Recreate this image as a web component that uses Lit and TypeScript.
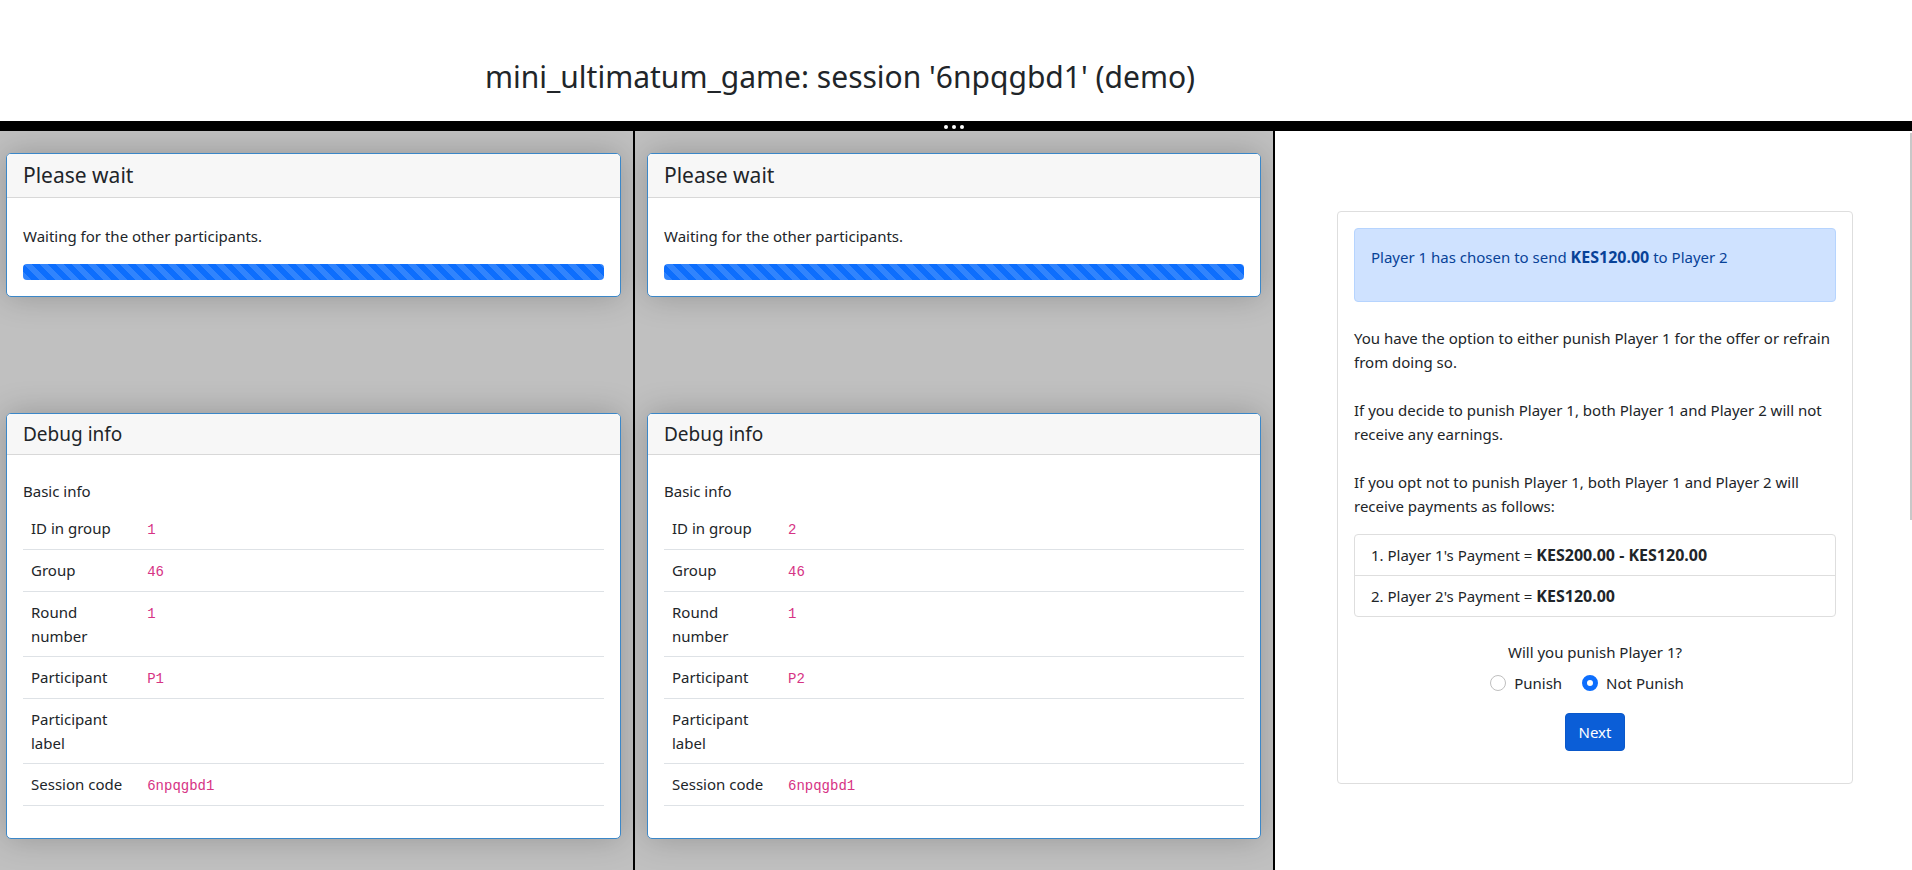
import { LitElement, html, css } from "lit";
import { customElement, property, state } from "lit/decorators.js";

const SESSION_CODE = "6npqgbd1";

const sharedStyles = css`
  :host {
    display: block;
    box-sizing: border-box;
    color: #212529;
    font-family: "Noto Sans", "Open Sans", sans-serif;
    font-size: 15px;
    line-height: 24px;
  }
  *,
  *::before,
  *::after {
    box-sizing: border-box;
  }
  h1,
  h2,
  h3,
  p {
    margin: 0;
    font-weight: 400;
  }
`;

@customElement("wait-page")
class WaitPage extends LitElement {
  @property({ type: Number }) idInGroup = 1;
  @property() participant = "P1";

  static styles = [
    sharedStyles,
    css`
      :host {
        min-width: 0;
        overflow: hidden;
        background: #c0c0c0;
        padding: 22px 12px 0;
      }
      :host(.first) {
        padding-left: 6px;
      }
      .card {
        border: 1px solid #3b87c8;
        border-radius: 5px;
        background: #fff;
        box-shadow: 0 0 32px rgba(0, 0, 0, 0.22);
      }
      .card + .card {
        margin-top: 116px;
      }
      .title,
      .subtitle {
        padding: 8px 16px;
        border-bottom: 1px solid #d8d8d8;
        border-radius: 4px 4px 0 0;
        background: #f7f7f7;
      }
      .title {
        font-size: 21px;
        line-height: 27px;
      }
      .subtitle {
        font-size: 19px;
        line-height: 24px;
      }
      .body {
        padding: 26px 16px 16px;
      }
      .debug {
        padding: 24px 16px 16px;
      }
      .progress {
        height: 16px;
        margin-top: 16px;
        border-radius: 4px;
        background-color: #0d6efd;
        background-image: linear-gradient(
          45deg,
          rgba(255, 255, 255, 0.15) 25%,
          transparent 25%,
          transparent 50%,
          rgba(255, 255, 255, 0.15) 50%,
          rgba(255, 255, 255, 0.15) 75%,
          transparent 75%,
          transparent
        );
        background-size: 16px 16px;
      }
      table {
        width: 100%;
        margin: 5px 0 16px;
        border-collapse: separate;
        border-spacing: 0;
      }
      th,
      td {
        height: 42px;
        padding: 8px;
        border-bottom: 1px solid #dee2e6;
        font-weight: 400;
        text-align: left;
        vertical-align: top;
      }
      th {
        width: 20%;
      }
      code {
        color: #d63384;
        font-family: "Liberation Mono", monospace;
        font-size: 14px;
        line-height: 16px;
      }
    `,
  ];

  render() {
    const rows: [string, string][] = [
      ["ID in group", String(this.idInGroup)],
      ["Group", "46"],
      ["Round number", "1"],
      ["Participant", this.participant],
      ["Participant label", ""],
      ["Session code", SESSION_CODE],
    ];
    return html`
      <section class="card">
        <h2 class="title">Please wait</h2>
        <div class="body">
          <p>Waiting for the other participants.</p>
          <div class="progress" role="progressbar" aria-label="Waiting"></div>
        </div>
      </section>
      <section class="card">
        <h3 class="subtitle">Debug info</h3>
        <div class="debug">
          <p>Basic info</p>
          <table>
            <tbody>
              ${rows.map(
                ([label, value]) => html`<tr>
                  <th scope="row">${label}</th>
                  <td>${value ? html`<code>${value}</code>` : ""}</td>
                </tr>`
              )}
            </tbody>
          </table>
        </div>
      </section>
    `;
  }
}

@customElement("decision-page")
class DecisionPage extends LitElement {
  @state() choice = "not-punish";

  static styles = [
    sharedStyles,
    css`
      :host {
        position: relative;
        min-width: 0;
        overflow: hidden;
        background: #fff;
        padding: 80px 59px 0 62px;
      }
      strong {
        font-size: 16px;
        font-weight: 700;
      }
      .card {
        padding: 16px 16px 32px;
        border: 1px solid #dedede;
        border-radius: 4px;
      }
      .alert {
        margin-bottom: 24px;
        padding: 16px 16px 32px;
        border: 1px solid #b6d4fe;
        border-radius: 4px;
        background: #cfe2ff;
        color: #084298;
      }
      .text + .text {
        margin-top: 24px;
      }
      .payments {
        margin: 16px 0 23px;
        padding: 0;
        border: 1px solid #dedede;
        border-radius: 4px;
        list-style: none;
      }
      .payments li {
        padding: 8px 16px;
      }
      .payments li + li {
        border-top: 1px solid #dedede;
      }
      fieldset {
        display: flex;
        flex-direction: column;
        align-items: center;
        min-width: 0;
        margin: 0;
        padding: 0;
        border: 0;
      }
      legend {
        width: 100%;
        padding: 0;
        text-align: center;
      }
      .options {
        display: flex;
        justify-content: center;
        gap: 20px;
        margin-top: 7px;
        padding-right: 16px;
      }
      label {
        display: flex;
        align-items: center;
        gap: 8px;
      }
      input {
        appearance: none;
        width: 16px;
        height: 16px;
        margin: 0;
        border: 1px solid #bfbfbf;
        border-radius: 50%;
        background: #fff;
      }
      input:checked {
        border: 5px solid #0d6efd;
      }
      .actions {
        display: flex;
        justify-content: center;
        margin-top: 18px;
      }
      button {
        padding: 6px 13px;
        border: 1px solid #0a58ca;
        border-radius: 4px;
        background: #0b5ed7;
        color: #fff;
        font: inherit;
      }
      .scroll-thumb {
        position: absolute;
        top: 2px;
        right: 0;
        width: 2px;
        height: 387px;
        background: #c8c8c8;
      }
    `,
  ];

  private option(value: string, label: string) {
    return html`<label>
      <input
        type="radio"
        name="punish"
        .value=${value}
        .checked=${this.choice === value}
        @change=${() => (this.choice = value)}
      />
      ${label}
    </label>`;
  }

  render() {
    return html`
      <div class="card">
        <div class="alert">
          <p>Player 1 has chosen to send <strong>KES120.00</strong> to Player 2</p>
        </div>
        <p class="text">
          You have the option to either punish Player 1 for the offer or refrain from doing so.
        </p>
        <p class="text">
          If you decide to punish Player 1, both Player 1 and Player 2 will not receive any
          earnings.
        </p>
        <p class="text">
          If you opt not to punish Player 1, both Player 1 and Player 2 will receive payments as
          follows:
        </p>
        <ul class="payments">
          <li>1. Player 1's Payment = <strong>KES200.00 - KES120.00</strong></li>
          <li>2. Player 2's Payment = <strong>KES120.00</strong></li>
        </ul>
        <fieldset>
          <legend>Will you punish Player 1?</legend>
          <div class="options">
            ${this.option("punish", "Punish")} ${this.option("not-punish", "Not Punish")}
          </div>
        </fieldset>
        <div class="actions"><button type="button">Next</button></div>
      </div>
      <div class="scroll-thumb"></div>
    `;
  }
}

@customElement("app-root")
class AppRoot extends LitElement {
  static styles = [
    sharedStyles,
    css`
      :host {
        display: flex;
        flex-direction: column;
        height: 100vh;
        overflow: hidden;
        background: #fff;
      }
      header {
        padding: 58px 232px 25px 0;
        text-align: center;
      }
      h1 {
        font-size: 30px;
        line-height: 38px;
      }
      .splitter {
        display: flex;
        flex: none;
        align-items: center;
        justify-content: center;
        gap: 4px;
        height: 10px;
        padding: 2px 4px 0 0;
        background: #000;
      }
      .dot {
        width: 4px;
        height: 4px;
        border-radius: 50%;
        background: #fff;
      }
      .frames {
        display: grid;
        flex: 1;
        grid-template-columns: 633fr 638fr 637fr;
        gap: 2px;
        min-height: 0;
        background: #000;
      }
    `,
  ];

  render() {
    return html`
      <header><h1>mini_ultimatum_game: session '${SESSION_CODE}' (demo)</h1></header>
      <div class="splitter">
        <span class="dot"></span><span class="dot"></span><span class="dot"></span>
      </div>
      <main class="frames">
        <wait-page class="first" .idInGroup=${1} participant="P1"></wait-page>
        <wait-page .idInGroup=${2} participant="P2"></wait-page>
        <decision-page></decision-page>
      </main>
    `;
  }
}
